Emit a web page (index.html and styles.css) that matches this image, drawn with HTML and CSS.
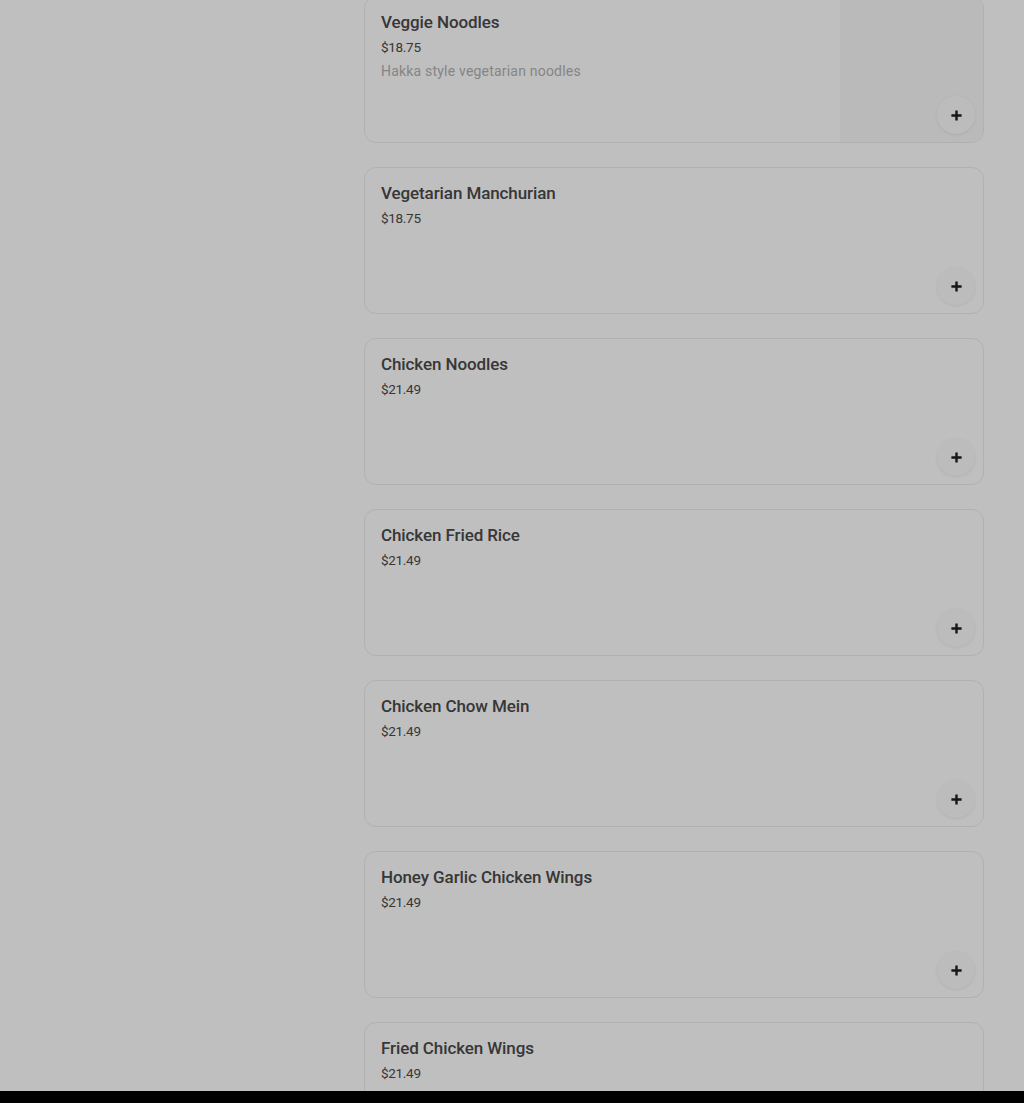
FILE: index.html
```html
<!DOCTYPE html>
<html>
<head>
  <meta charset="UTF-8" />
  <meta name="viewport" content="width=device-width, initial-scale=1.0" />
  <title>Menu</title>
  <link rel="stylesheet" href="styles.css">
</head>
<body>
  <div class="page">
    <div class="sidebar"></div>

    <div class="menu-list">
      <div class="item-card">
        <div class="item-info">
          <div class="item-name">Veggie Noodles</div>
          <div class="item-price">$18.75</div>
          <div class="item-desc">Hakka style vegetarian noodles</div>
        </div>
        <div class="item-img"></div>
        <button class="add-btn" aria-label="Add">
          <svg viewBox="0 0 14 14" width="14" height="14"><path d="M7 1.5v11M1.5 7h11" stroke="#1f1f1f" stroke-width="2.6"/></svg>
        </button>
      </div>

      <div class="item-card">
        <div class="item-info">
          <div class="item-name">Vegetarian Manchurian</div>
          <div class="item-price">$18.75</div>
        </div>
        <button class="add-btn" aria-label="Add">
          <svg viewBox="0 0 14 14" width="14" height="14"><path d="M7 1.5v11M1.5 7h11" stroke="#1f1f1f" stroke-width="2.6"/></svg>
        </button>
      </div>

      <div class="item-card">
        <div class="item-info">
          <div class="item-name">Chicken Noodles</div>
          <div class="item-price">$21.49</div>
        </div>
        <button class="add-btn" aria-label="Add">
          <svg viewBox="0 0 14 14" width="14" height="14"><path d="M7 1.5v11M1.5 7h11" stroke="#1f1f1f" stroke-width="2.6"/></svg>
        </button>
      </div>

      <div class="item-card">
        <div class="item-info">
          <div class="item-name">Chicken Fried Rice</div>
          <div class="item-price">$21.49</div>
        </div>
        <button class="add-btn" aria-label="Add">
          <svg viewBox="0 0 14 14" width="14" height="14"><path d="M7 1.5v11M1.5 7h11" stroke="#1f1f1f" stroke-width="2.6"/></svg>
        </button>
      </div>

      <div class="item-card">
        <div class="item-info">
          <div class="item-name">Chicken Chow Mein</div>
          <div class="item-price">$21.49</div>
        </div>
        <button class="add-btn" aria-label="Add">
          <svg viewBox="0 0 14 14" width="14" height="14"><path d="M7 1.5v11M1.5 7h11" stroke="#1f1f1f" stroke-width="2.6"/></svg>
        </button>
      </div>

      <div class="item-card">
        <div class="item-info">
          <div class="item-name">Honey Garlic Chicken Wings</div>
          <div class="item-price">$21.49</div>
        </div>
        <button class="add-btn" aria-label="Add">
          <svg viewBox="0 0 14 14" width="14" height="14"><path d="M7 1.5v11M1.5 7h11" stroke="#1f1f1f" stroke-width="2.6"/></svg>
        </button>
      </div>

      <div class="item-card">
        <div class="item-info">
          <div class="item-name">Fried Chicken Wings</div>
          <div class="item-price">$21.49</div>
        </div>
        <button class="add-btn" aria-label="Add">
          <svg viewBox="0 0 14 14" width="14" height="14"><path d="M7 1.5v11M1.5 7h11" stroke="#1f1f1f" stroke-width="2.6"/></svg>
        </button>
      </div>
    </div>
  </div>

  <!-- modal backdrop -->
  <div class="backdrop"></div>
  <div class="bottom-bar"></div>
</body>
</html>
```

FILE: styles.css
```css
* {
  margin: 0;
  padding: 0;
  box-sizing: border-box;
}

html, body {
  height: 100%;
  overflow: hidden;
}

body {
  font-family: Roboto, 'Liberation Sans', Arial, sans-serif;
  background: #fff;
  color: #1a1a1a;
}

.page {
  display: grid;
  grid-template-columns: 364px 620px;
}

.menu-list {
  display: flex;
  flex-direction: column;
  gap: 24px;
  margin-top: -4px;
}

.item-card {
  position: relative;
  display: flex;
  height: 147px;
  background: #fff;
  border: 1px solid #ececec;
  border-radius: 12px;
  overflow: hidden;
}

.item-info {
  flex: 1;
  padding: 15px 16px;
}

.item-name {
  font-size: 17px;
  font-weight: 500;
  color: #4a4a4a;
  line-height: 20px;
  letter-spacing: -0.1px;
}

.item-price {
  margin-top: 5px;
  font-size: 13.5px;
  color: #4a4a4a;
  line-height: 20px;
  letter-spacing: -0.3px;
}

.item-desc {
  margin-top: 4px;
  font-size: 14px;
  color: #b2b2b2;
  line-height: 20px;
  letter-spacing: 0.2px;
}

.item-img {
  width: 143px;
  background: #f8f8f8;
}

.add-btn {
  position: absolute;
  right: 8px;
  bottom: 8px;
  width: 38px;
  height: 38px;
  border: none;
  border-radius: 50%;
  background: #fbfbfb;
  box-shadow: 0 1px 3px rgba(0,0,0,0.08);
  display: flex;
  align-items: center;
  justify-content: center;
  cursor: pointer;
}

.add-btn svg {
  width: 13px;
  height: 13px;
}

.backdrop {
  position: fixed;
  inset: 0;
  background: rgba(0,0,0,0.25);
}

.bottom-bar {
  position: fixed;
  left: 0;
  right: 0;
  bottom: 0;
  height: 12px;
  background: #000;
}
```
